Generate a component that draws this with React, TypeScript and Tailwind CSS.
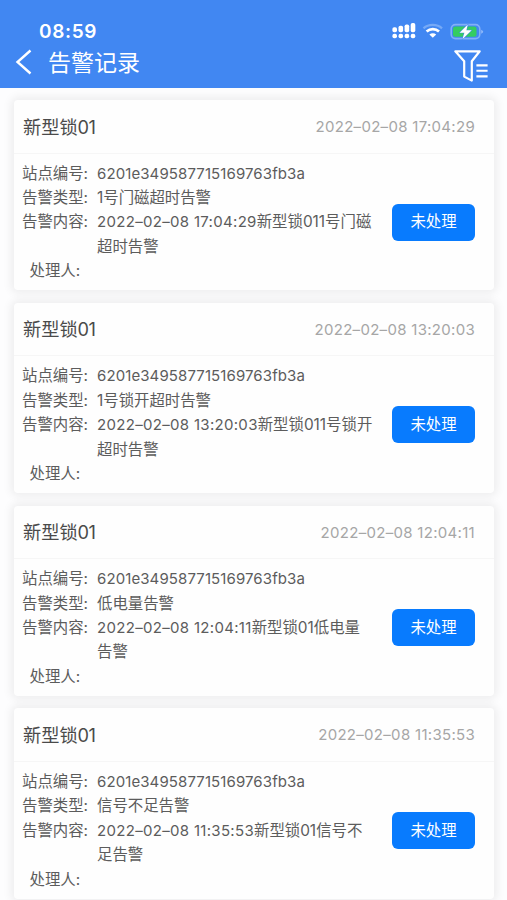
interface Alarm {
  time: string;
  type: string;
  lines: [string, string];
}

const alarms: Alarm[] = [
  { time: "2022–02–08 17:04:29", type: "1号门磁超时告警", lines: ["新型锁011号门磁", "超时告警"] },
  { time: "2022–02–08 13:20:03", type: "1号锁开超时告警", lines: ["新型锁011号锁开", "超时告警"] },
  { time: "2022–02–08 12:04:11", type: "低电量告警", lines: ["新型锁01低电量", "告警"] },
  { time: "2022–02–08 11:35:53", type: "信号不足告警", lines: ["新型锁01信号不", "足告警"] },
];

function StatusIcons() {
  return (
    <svg className="mb-[3px] h-5 w-[94px]" viewBox="0 0 94 20" fill="none">
      <g fill="#fff">
        {[0, 1, 2, 3].map((i) => (
          <g key={i}>
            <rect x={2.4 + i * 6.1} y={6.2 - i * 1.4} width="4.6" height={5 + i * 1.4} rx="1.8" />
            <rect x={2.4 + i * 6.1} y="12.8" width="4.6" height="4.4" rx="1.9" />
          </g>
        ))}
      </g>
      <path d="M33.5 7.4C38.5 2.8 47 2.8 52 7.4" stroke="#76a9f6" strokeWidth="2.3" />
      <path d="M36.6 10.6C40.2 7.4 45.5 7.4 49 10.6" stroke="#fff" strokeWidth="2.7" />
      <path d="M39.4 13.6C41.4 11.9 44.2 11.9 46.2 13.6L42.8 16.8Z" fill="#fff" />
      <rect x="61.2" y="3.6" width="28.6" height="14" rx="4.3" stroke="#82b0f8" strokeWidth="1.6" />
      <path d="M91.2 8.7Q93.2 9.5 93.2 10.7T91.2 12.8Z" fill="#92baf9" />
      <rect x="63" y="5.4" width="23.5" height="10.4" rx="2.3" fill="#34cc61" />
      <path d="M77.8 3.4L69.6 11.7H74.4L72.4 18.2L81.6 9.3H76.4Z" fill="#fff" stroke="#4187f2" strokeWidth="1" paintOrder="stroke" />
    </svg>
  );
}

function FilterIcon() {
  return (
    <svg className="h-[34px] w-[36px]" viewBox="0 0 36 34" fill="none" stroke="#fff">
      <path d="M2.3 2.3H26.7L18.8 12.3V31.6L11.2 27.6V12.3Z" strokeWidth="2.2" strokeLinejoin="round" />
      <path d="M23.4 16.4H34.6M23.4 21.8H34.6M23.4 27.4H34.6" strokeWidth="2.1" />
    </svg>
  );
}

function Row({ label, children }: { label: string; children?: React.ReactNode }) {
  return (
    <div className="flex leading-[24.4px]">
      <div className="w-[75px] shrink-0 whitespace-nowrap">{label}:</div>
      <div className="whitespace-nowrap">{children}</div>
    </div>
  );
}

function AlarmCard({ alarm }: { alarm: Alarm }) {
  return (
    <section className="h-[190.3px] shrink-0 rounded-[4px] bg-[#fefefe] shadow-[0_0_10px_3px_rgba(0,0,0,0.065)]">
      <header className="flex h-[53.5px] items-center justify-between border-b border-[#f6f6f6] pl-[9px] pr-[19px] pt-[2px]">
        <h2 className="text-[18.2px] text-[#4a4a4a]">新型锁<span className="tracking-[-0.5px]">01</span></h2>
        <time className="text-[15px] tracking-[0.3px] text-[#a6a6a6]">{alarm.time}</time>
      </header>
      <div className="flex items-center justify-between pl-[8px] pr-[19px] pt-[8px] text-[15.4px] text-[#5c5c5c]">
        <div>
          <Row label="站点编号"><span className="text-[15px] tracking-[0.1px]">6201e349587715169763fb3a</span></Row>
          <Row label="告警类型">{alarm.type}</Row>
          <Row label="告警内容">
            <span className="text-[15px] tracking-[0.31px]">{alarm.time}</span>{alarm.lines[0]}
            <br />
            {alarm.lines[1]}
          </Row>
          <div className="pl-[7.5px] leading-[24.4px]">处理人:</div>
        </div>
        <button className="-mt-px h-[37px] w-[83px] shrink-0 rounded-[6px] bg-[#087bfe] text-[15.4px] text-white">未处理</button>
      </div>
    </section>
  );
}

export default function App() {
  return (
    <main className="flex h-[900px] w-[507px] flex-col overflow-hidden bg-[#fdfdfe] font-['Inter','Noto_Sans_CJK_SC',sans-serif]">
      <header className="h-[87.5px] shrink-0 bg-[#4187f2] text-white">
        <div className="flex h-[44px] items-end justify-between pl-[39px] pr-[23px]">
          <span className="text-[19px] font-semibold leading-[25px] tracking-[0.65px]">08:59</span>
          <StatusIcons />
        </div>
        <div className="flex h-[40px] items-center pl-[15px] pr-[18px]">
          <svg className="mt-[-4px] h-[26px] w-[18px]" viewBox="0 0 18 26" fill="none" stroke="#fff" strokeWidth="2.4">
            <path d="M15.5 1.5L2.5 13L15.5 24.5" />
          </svg>
          <h1 className="mt-[-1px] pl-[15px] text-[23px]">告警记录</h1>
          <div className="ml-auto mt-[3px]"><FilterIcon /></div>
        </div>
      </header>
      <div className="flex flex-col gap-[12.5px] pl-[14px] pr-[13px] pt-[12.5px]">
        {alarms.map((alarm) => <AlarmCard key={alarm.time} alarm={alarm} />)}
      </div>
    </main>
  );
}
